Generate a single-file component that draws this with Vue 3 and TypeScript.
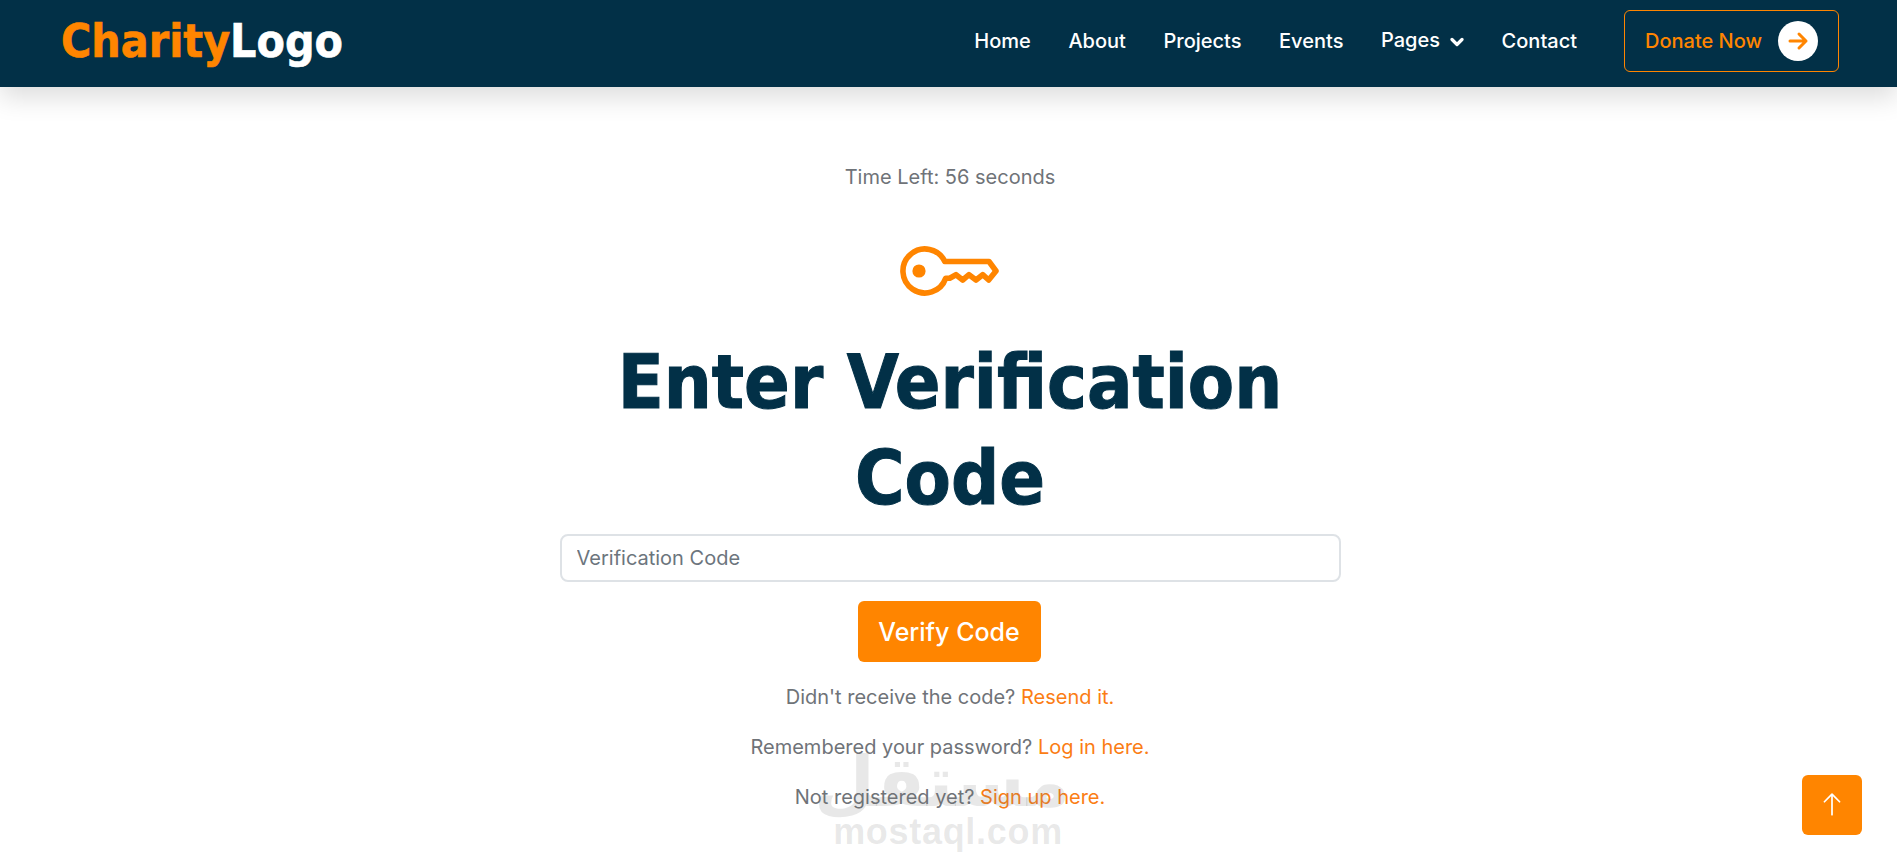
<template>
  <div class="page">
    <header class="navbar">
      <a class="logo" href="#"><span class="logo-accent">Charity</span>Logo</a>
      <nav class="nav-links">
        <a v-for="link in links" :key="link" class="nav-link" href="#">{{ link }}</a>
        <a class="nav-link pages-link" href="#">
          Pages
          <svg class="chevron" viewBox="0 0 14 10" fill="none" stroke="currentColor" stroke-width="3.2" stroke-linecap="round" stroke-linejoin="round">
            <polyline points="2,2.5 7,7.5 12,2.5"></polyline>
          </svg>
        </a>
        <a class="nav-link" href="#">Contact</a>
      </nav>
      <a class="donate" href="#">
        Donate Now
        <span class="donate-circle">
          <svg viewBox="0 0 24 24" fill="none" stroke="currentColor" stroke-width="3" stroke-linecap="round" stroke-linejoin="round">
            <path d="M4 12H20M13 5L20 12L13 19"></path>
          </svg>
        </span>
      </a>
    </header>

    <main class="content">
      <p class="timer">Time Left: {{ secondsLeft }} seconds</p>
      <svg class="key-icon" viewBox="0 0 100 50" fill="none" stroke="currentColor" stroke-width="5.6" stroke-linejoin="round">
        <path d="M44.8 15.5H89L96 25L88.7 34L82.7 28.7L76 34L69 28.7L62.7 34L56 28.7L49.7 32.3H45.7A22 22 0 1 1 44.8 15.5Z"></path>
        <circle cx="19" cy="25" r="6.6" fill="currentColor" stroke="none"></circle>
      </svg>
      <h1 class="title">Enter Verification Code</h1>
      <form class="code-form" @submit.prevent>
        <input class="code-input" type="text" placeholder="Verification Code" />
        <button class="verify-btn" type="submit">Verify Code</button>
      </form>
      <p v-for="line in helpLines" :key="line.link" class="help-line">
        {{ line.text }} <a href="#">{{ line.link }}</a>
      </p>
    </main>

    <div class="watermark" aria-hidden="true">
      <span class="wm-arabic">مستقل</span>
      <span class="wm-latin">mostaql.com</span>
    </div>

    <a class="to-top" href="#" aria-label="Back to top">
      <svg viewBox="0 0 24 24" fill="none" stroke="currentColor" stroke-width="1.6" stroke-linecap="round" stroke-linejoin="round">
        <path d="M12 21V2M5 9L12 2L19 9"></path>
      </svg>
    </a>
  </div>
</template>

<script setup lang="ts">
const links: string[] = ['Home', 'About', 'Projects', 'Events']
const secondsLeft = 56

const helpLines = [
  { text: "Didn't receive the code?", link: 'Resend it.' },
  { text: 'Remembered your password?', link: 'Log in here.' },
  { text: 'Not registered yet?', link: 'Sign up here.' }
]
</script>

<style>
html,
body {
  margin: 0;
  background: #fff;
}
</style>

<style scoped>
.page {
  position: relative;
  height: 867px;
  overflow: hidden;
  font-family: Inter, "Liberation Sans", sans-serif;
  color: #6f7378;
}

.navbar {
  height: 87px;
  box-sizing: border-box;
  padding: 0 58px 5px 61px;
  display: flex;
  align-items: center;
  background: #023047;
  box-shadow: 0 10px 25px rgba(0, 0, 0, 0.14);
}

.logo {
  font-family: "DejaVu Sans", sans-serif;
  font-stretch: condensed;
  font-size: 46px;
  font-weight: 700;
  -webkit-text-stroke: 0.6px currentColor;
  color: #fff;
  text-decoration: none;
  margin-right: auto;
}

.logo-accent {
  color: #ff8500;
}

.nav-links {
  display: flex;
  align-items: center;
  gap: 37.6px;
  margin-right: 47px;
}

.nav-link {
  font-size: 20px;
  font-weight: 500;
  color: #fff;
  text-decoration: none;
}

.pages-link {
  display: flex;
  align-items: center;
  gap: 10px;
  margin-top: -2px;
}

.chevron {
  width: 14px;
  height: 10px;
  margin-top: 3px;
}

.donate {
  width: 215px;
  height: 62px;
  box-sizing: border-box;
  padding: 0 20px;
  display: flex;
  align-items: center;
  justify-content: space-between;
  border: 1px solid #ff8500;
  border-radius: 6px;
  color: #ff8500;
  font-size: 20px;
  font-weight: 500;
  text-decoration: none;
}

.donate-circle {
  width: 40px;
  height: 40px;
  border-radius: 50%;
  background: #fff;
  display: flex;
  align-items: center;
  justify-content: center;
}

.donate-circle svg {
  width: 24px;
  height: 24px;
}

.content {
  padding: 75px 0 0 3px;
  display: flex;
  flex-direction: column;
  align-items: center;
}

.timer {
  margin: 0 0 54px;
  font-size: 20px;
  line-height: 30px;
}

.key-icon {
  width: 100px;
  height: 50px;
  color: #ff8500;
  margin-bottom: 38px;
}

.title {
  width: 781px;
  margin: 0 0 8px;
  font-family: "DejaVu Sans", sans-serif;
  font-stretch: condensed;
  font-size: 75px;
  font-weight: 700;
  -webkit-text-stroke: 1px currentColor;
  line-height: 96px;
  text-align: center;
  color: #023047;
}

.code-form {
  width: 781px;
  display: flex;
  flex-direction: column;
  align-items: center;
  gap: 19px;
  margin-bottom: 20px;
}

.code-input {
  width: 100%;
  height: 48px;
  box-sizing: border-box;
  padding: 0 15px;
  border: 2px solid #dee2e6;
  border-radius: 8px;
  font: 400 20px Inter, sans-serif;
  color: #212529;
}

.code-input::placeholder {
  color: #6c757d;
}

.verify-btn {
  width: 183px;
  height: 61px;
  margin-left: -2px;
  border: 0;
  border-radius: 6px;
  background: #ff8500;
  color: #fff;
  font: 500 25px Inter, sans-serif;
}

.help-line {
  margin: 0 0 20px;
  font-size: 20px;
  line-height: 30px;
}

.help-line a {
  color: #fb7d14;
  text-decoration: none;
}

.watermark {
  position: absolute;
  left: 825px;
  top: 752px;
  width: 246px;
  display: flex;
  flex-direction: column;
  align-items: center;
  gap: 2px;
  color: rgba(120, 120, 120, 0.17);
  pointer-events: none;
}

.wm-arabic {
  font-family: "DejaVu Sans", sans-serif;
  font-size: 70px;
  font-weight: 700;
  line-height: 60px;
  margin-right: 12px;
}

.wm-latin {
  font-family: "Liberation Sans", sans-serif;
  font-size: 36px;
  font-weight: 700;
  line-height: 36px;
  letter-spacing: 0.7px;
}

.to-top {
  position: absolute;
  left: 1802px;
  top: 775px;
  width: 60px;
  height: 60px;
  border-radius: 6px;
  background: #ff8500;
  color: #fff;
  display: flex;
  align-items: center;
  justify-content: center;
}

.to-top svg {
  width: 26px;
  height: 26px;
}
</style>
